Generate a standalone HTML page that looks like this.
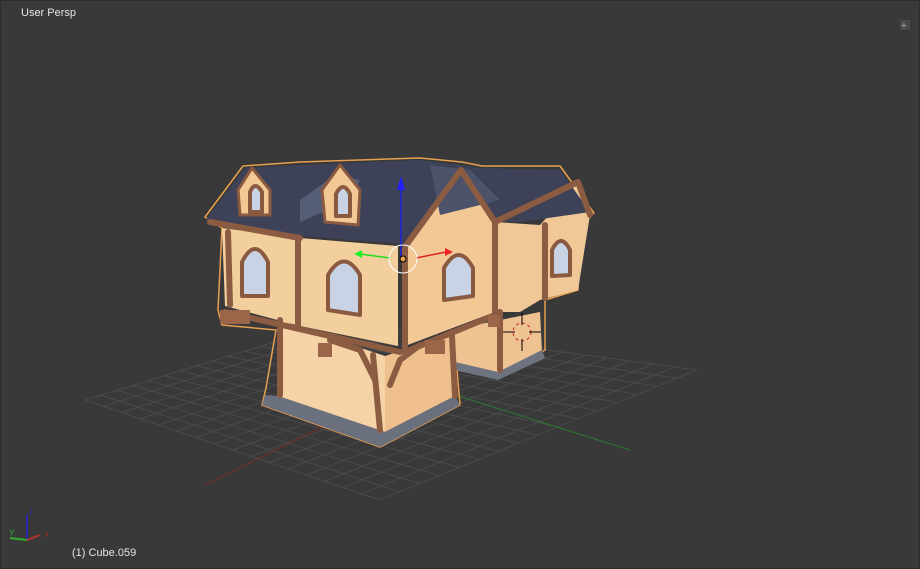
<!DOCTYPE html>
<html><head><style>
html,body{margin:0;padding:0;background:#393939;width:920px;height:569px;overflow:hidden;font-family:"Liberation Sans",sans-serif}
.t{position:absolute;color:#e6e6e6;font-size:11px}
</style></head><body>
<svg width="920" height="569" style="position:absolute;left:0;top:0">
<rect width="920" height="569" fill="#393939"/>
<rect x="0.5" y="0.5" width="919" height="568" fill="none" stroke="#2c2c2c"/>
<g id="grid" stroke="#4a4a4a" stroke-width="1"></g>
<line x1="205" y1="485" x2="380" y2="398" stroke="#7a2a2a" stroke-width="1"/>
<line x1="455" y1="395" x2="630" y2="450" stroke="#2e7a2e" stroke-width="1"/>
<g stroke-linejoin="round">
<polygon points="205,217 243,166 300,162 420,158 462,162 482,166 560,166 594,213 582,220 578,290 545,300 545,350 500,378 457,370 460,405 380,447 262,405 266,388 276,330 222,325 218,310 222,228" fill="none" stroke="#e8a050" stroke-width="1.5"/>
<polygon points="495,222 540,225 578,182 590,215 578,290 540,300 520,312 495,312" fill="#f0c796"/>
<polygon points="450,330 540,312 542,352 498,374 455,364" fill="#efc291"/>
<polygon points="455,362 498,372 542,350 545,358 498,380 455,370" fill="#6e7380"/>
<polygon points="222,228 300,238 398,246 398,346 300,326 225,306" fill="#f4cf9e"/>
<polygon points="405,246 460,170 495,222 495,312 405,346" fill="#f2c894"/>
<polygon points="278,318 300,328 385,356 385,432 278,396" fill="#f6d3a6"/>
<polygon points="385,356 452,334 455,396 385,432" fill="#efc08e"/>
<polygon points="265,395 278,396 385,432 455,396 460,405 380,447 262,405" fill="#6b707e"/>
<polygon points="207,218 245,168 300,165 420,160 460,165 480,168 560,170 590,212 520,222 500,222 460,170 405,244 300,236 207,225" fill="#3d4258"/>
<polygon points="300,200 335,175 360,180 350,200 300,222" fill="#565d76"/>
<polygon points="430,165 470,170 500,200 440,215" fill="#4c5269"/>
<polygon points="238,190 252,168 270,190 270,215 240,215" fill="#f2c894" stroke="#8a5a40" stroke-width="3"/>
<polygon points="322,190 340,165 360,190 358,225 325,222" fill="#f2c894" stroke="#8a5a40" stroke-width="3"/>
<g stroke="#8b5b42" stroke-width="6" fill="none" stroke-linecap="round">
<line x1="405" y1="248" x2="405" y2="352"/>
<line x1="298" y1="240" x2="298" y2="325"/>
<line x1="228" y1="232" x2="230" y2="305"/>
<polyline points="407,244 461,170 495,222"/>
<line x1="495" y1="222" x2="495" y2="312"/>
<line x1="545" y1="225" x2="545" y2="298"/>
<polyline points="495,222 578,182 590,215"/>
<line x1="225" y1="312" x2="400" y2="352"/>
<line x1="405" y1="352" x2="495" y2="315"/>
<line x1="280" y1="320" x2="280" y2="395"/>
<line x1="373" y1="355" x2="380" y2="430"/>
<line x1="452" y1="336" x2="455" y2="396"/>
<line x1="500" y1="312" x2="500" y2="370"/>
<polyline points="330,340 360,350 375,380"/>
<polyline points="420,345 400,360 390,385"/>
<line x1="210" y1="222" x2="300" y2="238"/>
</g>
<g fill="#9a6548"><rect x="220" y="310" width="30" height="14"/><rect x="318" y="343" width="14" height="14"/><rect x="425" y="340" width="20" height="14"/><rect x="488" y="315" width="12" height="12"/></g>
<g fill="#c9d3e6" stroke="#8a5a40" stroke-width="4">
<path d="M242,296 V262 Q255,236 268,262 V296 Z"/>
<path d="M328,310 V275 Q344,248 360,275 V315 Z"/>
<path d="M444,300 V268 Q459,242 473,268 V296 Z"/>
<path d="M552,276 V250 Q561,232 570,250 V275 Z"/>
<path d="M250,212 V192 Q255,180 262,192 V212 Z"/>
<path d="M336,216 V194 Q343,180 350,194 V216 Z"/>
</g>
</g>
<line x1="401" y1="258" x2="401" y2="185" stroke="#2020e0" stroke-width="1.5"/>
<polygon points="401,176 397,190 405,190" fill="#2020ff"/>
<line x1="390" y1="258" x2="360" y2="254" stroke="#22dd22" stroke-width="1.5"/>
<polygon points="354,254 362,250 362,258" fill="#22ee22"/>
<line x1="416" y1="258" x2="446" y2="252" stroke="#dd2222" stroke-width="1.5"/>
<polygon points="453,252 445,248 445,256" fill="#ee2222"/>
<circle cx="403" cy="259" r="14" fill="none" stroke="#fff" stroke-width="1"/>
<circle cx="403" cy="259" r="3" fill="#e8a050" stroke="#000" stroke-width="1"/>
<circle cx="522" cy="332" r="9" fill="none" stroke="#cc2222" stroke-dasharray="3,3"/>
<g stroke="#000"><line x1="503" y1="332" x2="515" y2="332"/><line x1="529" y1="332" x2="541" y2="332"/><line x1="522" y1="313" x2="522" y2="325"/><line x1="522" y1="339" x2="522" y2="351"/></g>
<line x1="27" y1="540" x2="27" y2="515" stroke="#2828b0" stroke-width="2"/>
<line x1="27" y1="540" x2="10" y2="538" stroke="#30b030" stroke-width="2"/>
<line x1="27" y1="540" x2="40" y2="535" stroke="#b03030" stroke-width="2"/>
<text x="29" y="514" font-size="8" fill="#2828b0" font-family="Liberation Sans">z</text>
<text x="10" y="534" font-size="8" fill="#30b030" font-family="Liberation Sans">y</text>
<text x="45" y="537" font-size="8" fill="#b03030" font-family="Liberation Sans">x</text>
<rect x="900" y="20" width="10" height="10" fill="#4a4a4a"/>
<text x="901" y="29" font-size="10" fill="#aaa" font-family="Liberation Sans">+</text>
</svg>
<div class="t" style="left:21px;top:7px">User Persp</div>
<div class="t" style="left:72px;top:547px">(1) Cube.059</div>
<script>
var g=document.getElementById('grid'),L=[85,400],B=[340,322],R=[697,370],F=[380,500],n=16,s='';
function p(u,v){var a=[L[0]+(B[0]-L[0])*u,L[1]+(B[1]-L[1])*u],b=[F[0]+(R[0]-F[0])*u,F[1]+(R[1]-F[1])*u];return[a[0]+(b[0]-a[0])*v,a[1]+(b[1]-a[1])*v];}
for(var i=0;i<=n;i++){var t=i/n,a=p(t,0),b=p(t,1),c=p(0,t),d=p(1,t);
s+='<line x1="'+a[0]+'" y1="'+a[1]+'" x2="'+b[0]+'" y2="'+b[1]+'"/><line x1="'+c[0]+'" y1="'+c[1]+'" x2="'+d[0]+'" y2="'+d[1]+'"/>';}
g.innerHTML=s;
</script>
</body></html>
